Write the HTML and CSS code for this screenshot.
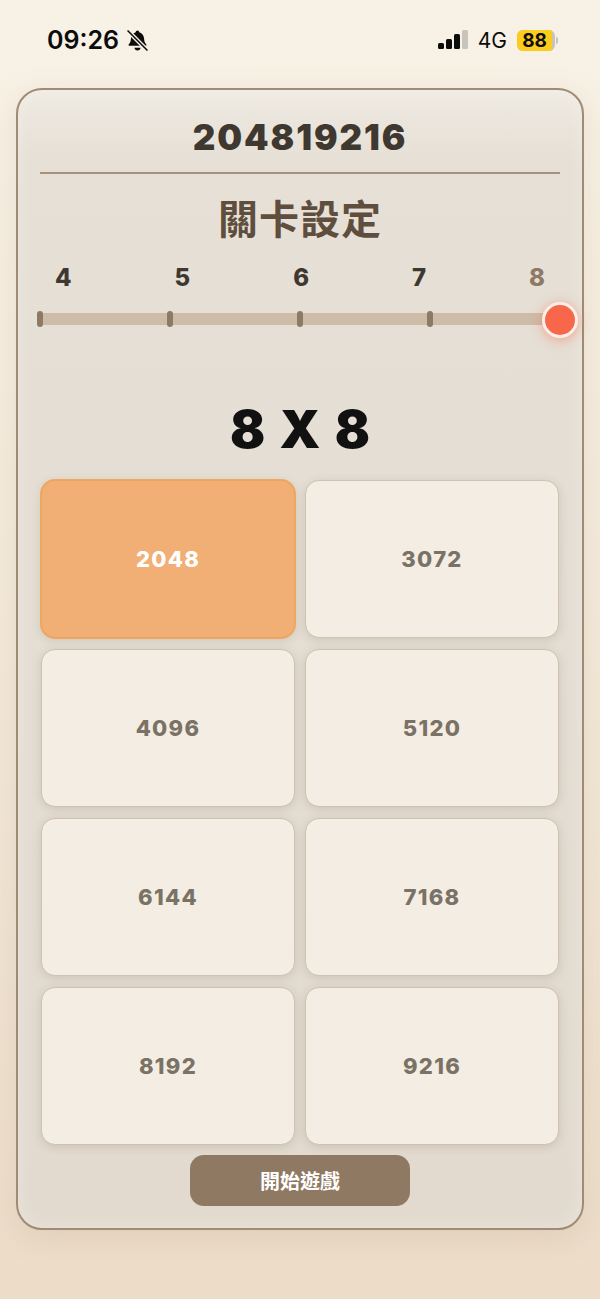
FILE: index.html
```html
<!DOCTYPE html>
<html lang="zh-Hant">
<head>
    <meta charset="UTF-8">
    <meta name="viewport" content="width=device-width, initial-scale=1.0">
    <title>204819216</title>
    <link rel="stylesheet" href="styles.css">
</head>
<body>
    <!-- Status bar -->
    <div class="status-bar">
        <div class="status-left">
            <span class="time">09:26</span>
            <svg class="bell" viewBox="0 0 22 22" width="23" height="23">
                <path d="M11 1.500c1 0 1.600.7 1.700 1.600 2.900.8 4.400 3.200 4.600 6.200.1 2.100.5 3.700 2 5.200.5.500.2 1.500-.6 1.500H3.300c-.8 0-1.100-1-.6-1.500 1.500-1.500 1.900-3.100 2-5.200.2-3 1.700-5.400 4.600-6.200.1-.9.7-1.600 1.700-1.600z"/>
                <path d="M8 18h6c-.2 1.500-1.400 2.500-3 2.500S8.200 19.500 8 18z"/>
                <path class="bell-gap" d="M1.500 1.500 20.500 20.500"/>
                <path class="bell-slash" d="M1.500 1.500 20.500 20.500"/>
            </svg>
        </div>
        <div class="status-right">
            <div class="signal">
                <span class="bar bar-1"></span>
                <span class="bar bar-2"></span>
                <span class="bar bar-3"></span>
                <span class="bar bar-4"></span>
            </div>
            <span class="network">4G</span>
            <div class="battery"><span class="battery-level">88</span></div>
            <span class="battery-nub"></span>
        </div>
    </div>

    <!-- Settings card -->
    <div class="card">
        <h1 class="game-title">204819216</h1>
        <h2 class="section-title">關卡設定</h2>

        <div class="size-labels">
            <span>4</span>
            <span>5</span>
            <span>6</span>
            <span>7</span>
            <span class="current">8</span>
        </div>
        <div class="slider">
            <span class="tick"></span>
            <span class="tick"></span>
            <span class="tick"></span>
            <span class="tick"></span>
            <span class="thumb"></span>
        </div>

        <div class="size-value">8 X 8</div>

        <div class="goal-grid">
            <button class="goal selected">2048</button>
            <button class="goal">3072</button>
            <button class="goal">4096</button>
            <button class="goal">5120</button>
            <button class="goal">6144</button>
            <button class="goal">7168</button>
            <button class="goal">8192</button>
            <button class="goal">9216</button>
        </div>

        <button class="start-btn">開始遊戲</button>
    </div>
</body>
</html>
```

FILE: styles.css
```css
* {
    box-sizing: border-box;
}

body {
    margin: 0;
    height: 1299px;
    overflow: hidden;
    padding: 0 16px;
    background: linear-gradient(180deg, #f8f2e6 0%, #f3e9da 50%, #ecdcc8 100%);
    font-family: Inter, "Noto Sans CJK TC", sans-serif;
}

/* Status bar */
.status-bar {
    height: 88px;
    padding: 0 26px 8px 31px;
    display: flex;
    justify-content: space-between;
    align-items: center;
    color: #0c0c0c;
}

.status-left {
    display: flex;
    align-items: center;
    gap: 7px;
}

.time {
    font-size: 25px;
    font-weight: 600;
}

.bell {
    fill: #0c0c0c;
}

.bell-slash,
.bell-gap {
    fill: none;
}

.bell-slash {
    stroke: #0c0c0c;
    stroke-width: 1.500;
}

.bell-gap {
    stroke: #f7f0e4;
    stroke-width: 4;
}

.status-right {
    display: flex;
    align-items: center;
}

.signal {
    display: flex;
    align-items: flex-end;
    gap: 2.500px;
    height: 20px;
    margin: 0 10px 2px 0;
}

.bar {
    width: 5.500px;
    border-radius: 1.500px;
    background: #0c0c0c;
}

.bar-1 { height: 6px; }
.bar-2 { height: 10px; }
.bar-3 { height: 15px; }
.bar-4 { height: 19px; background: #c9c4bb; }

.network {
    font-size: 21px;
    font-weight: 400;
    margin-right: 10px;
}

.battery {
    width: 38px;
    height: 21px;
    border-radius: 6px;
    overflow: hidden;
    background: #c9c4bb;
}

.battery-level {
    display: block;
    width: 35px;
    height: 100%;
    background: #fbcb1e;
    font-size: 19px;
    font-weight: 700;
    line-height: 21px;
    text-align: center;
}

.battery-nub {
    width: 2px;
    height: 7px;
    margin-left: 1px;
    border-radius: 0 2px 2px 0;
    background: #c9c4bb;
}

/* Settings card */
.card {
    height: 1142px;
    padding: 26px 22px 0;
    border: 2px solid #a08b74;
    border-radius: 26px;
    background: linear-gradient(180deg, #efeae2 0%, #e6e0d6 6%, #e2dacf 100%);
    box-shadow: inset 0 0 18px rgba(255, 255, 255, 0.3), 0 8px 30px rgba(160, 130, 100, 0.16);
}

.game-title {
    margin: 0;
    height: 58px;
    border-bottom: 2px solid #a8927b;
    color: #3e3830;
    font-size: 35px;
    font-weight: 900;
    line-height: 42px;
    letter-spacing: 1.900px;
    text-align: center;
}

.section-title {
    margin: 17px 0 0;
    color: #5f4e3d;
    font-size: 40px;
    font-weight: 700;
    line-height: 58px;
    letter-spacing: 1px;
    text-align: center;
}

.size-labels {
    margin-top: 14px;
    padding: 0 15px;
    display: flex;
    justify-content: space-between;
    color: #3e3830;
    font-size: 24px;
    font-weight: 800;
    line-height: 30px;
}

.size-labels .current {
    color: #8d7a66;
}

.slider {
    position: relative;
    height: 12px;
    margin-top: 20px;
    display: flex;
    gap: 124px;
    align-items: center;
    background: #cdbca7;
    border-radius: 4px;
}

.tick {
    width: 6px;
    height: 16px;
    flex: none;
    margin-left: -3px;
    margin-right: 3px;
    border-radius: 3px;
    background: #8d7a66;
}

/* Thumb sits over the end of the track */
.thumb {
    position: absolute;
    right: -18px;
    top: -11px;
    width: 36px;
    height: 36px;
    border: 3px solid #fbeee6;
    border-radius: 50%;
    background: #f9674a;
    box-shadow: 0 2px 12px rgba(249, 103, 74, 0.5);
}

.size-value {
    margin-top: 73px;
    color: #111;
    font-size: 52px;
    font-weight: 900;
    line-height: 64px;
    word-spacing: 4px;
    text-align: center;
}

.goal-grid {
    margin: 18px 0 0 1px;
    width: 518px;
    display: grid;
    grid-template-columns: 254px 254px;
    grid-auto-rows: 158px;
    column-gap: 10px;
    row-gap: 11px;
}

.goal {
    border: 1px solid #cfc1b0;
    border-radius: 14px;
    background: #f4ede3;
    box-shadow: 0 2px 10px rgba(120, 100, 80, 0.2);
    color: #7b7266;
    font-family: inherit;
    font-size: 22px;
    font-weight: 800;
    letter-spacing: 1.300px;
}

.goal.selected {
    border: 1px solid #eba55f;
    background: #f1af76;
    box-shadow: 0 0 0 1px #eda964, 0 2px 10px rgba(120, 100, 80, 0.2);
    color: #fff;
}

.start-btn {
    display: block;
    width: 220px;
    height: 51px;
    margin: 10px auto 0;
    border: none;
    border-radius: 14px;
    background: #8f7963;
    color: #fff;
    font-family: inherit;
    font-size: 20px;
    font-weight: 700;
}
```
